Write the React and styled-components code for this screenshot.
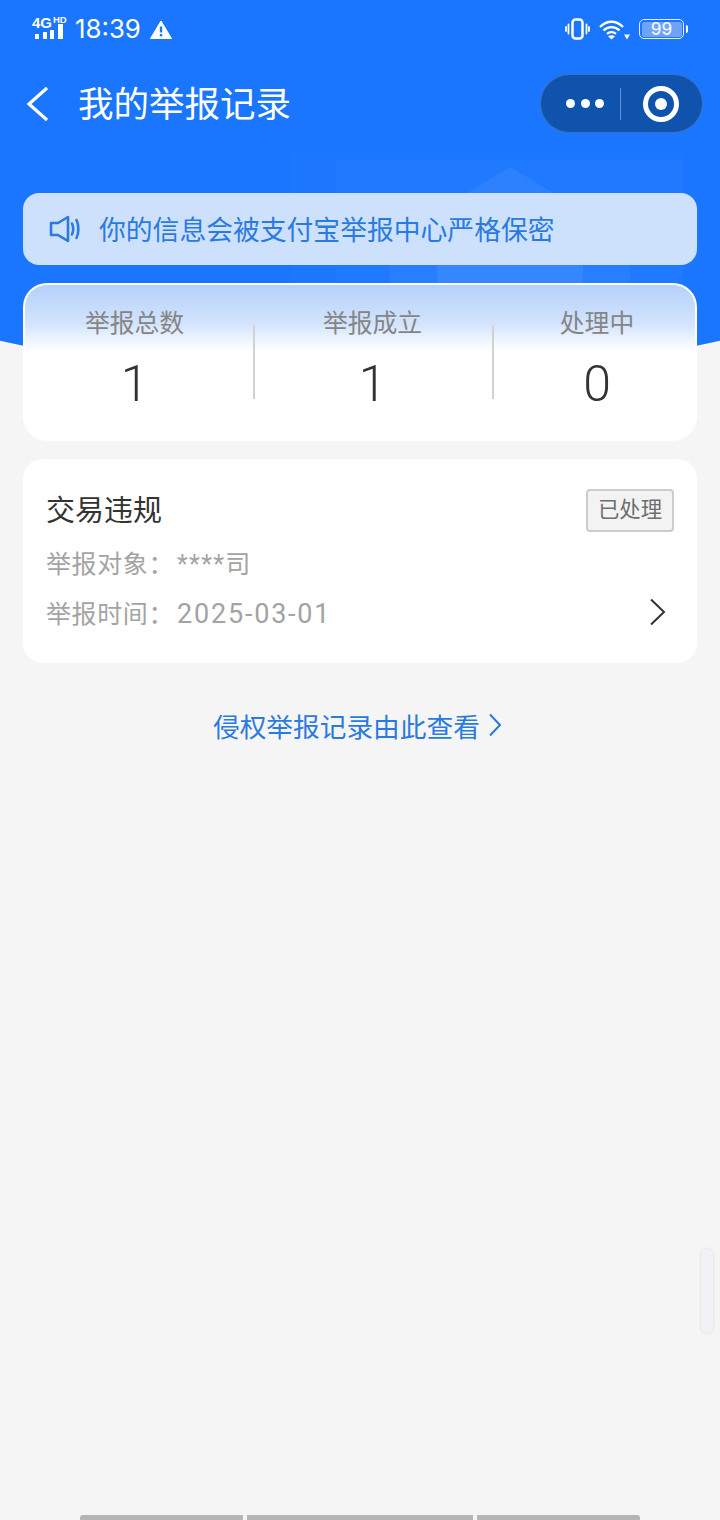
import React from "react";
import styled, { createGlobalStyle } from "styled-components";

const Global = createGlobalStyle`
  html, body { margin: 0; padding: 0; background: #f5f5f5; }
  * { box-sizing: border-box; }
`;

const CJK = `"Noto Sans CJK SC", "Noto Sans", sans-serif`;

const Page = styled.div`
  position: relative;
  width: 720px;
  height: 1520px;
  overflow: hidden;
  background: #f5f5f5;
  font-family: ${CJK};
`;
const Backdrop = styled.div`
  position: absolute;
  inset: 0 0 auto 0;
  height: 380px;
  background: #1a76ff;
  clip-path: ellipse(1670px 1670px at 50% calc(100% - 1670px));
`;
const Watermark = styled.svg`
  position: absolute;
  left: 280px;
  top: 150px;
`;
const Content = styled.div`
  position: relative;
  display: flex;
  flex-direction: column;
`;
const StatusBar = styled.div`
  height: 58px;
  padding: 0 32px 0 33px;
  display: flex;
  align-items: center;
  justify-content: space-between;
  color: #fff;
`;
const StatusGroup = styled.div`
  display: flex;
  align-items: center;
  gap: ${(p) => p.$gap || 9}px;
`;
const Signal = styled.div`
  position: relative;
  width: 33px;
  height: 24px;
  margin-top: -5px;
`;
const SigText = styled.span`
  position: absolute;
  left: ${(p) => p.$left}px;
  top: ${(p) => p.$top}px;
  font: 700 ${(p) => p.$size}px/1 "Liberation Sans", sans-serif;
  color: #fff;
`;
const Bars = styled.div`
  position: absolute;
  left: 2px;
  bottom: 0;
  display: flex;
  align-items: flex-end;
  gap: 3.5px;
`;
const Bar = styled.i`
  display: block;
  width: ${(p) => p.$w || 4}px;
  height: ${(p) => p.$h}px;
  background: #fff;
`;
const Time = styled.span`
  font: 400 25.8px/30px Inter, sans-serif;
  color: #fff;
`;
const Battery = styled.div`
  position: relative;
  width: 45px;
  height: 20px;
  margin-right: 4px;
  border: 1.5px solid #e6f0ff;
  border-radius: 5px;
  padding: 1.5px;
  &::after {
    content: "";
    position: absolute;
    right: -5px;
    top: 4.5px;
    width: 2.5px;
    height: 8px;
    border-radius: 0 2px 2px 0;
    background: #fff;
  }
`;
const BatteryFill = styled.div`
  height: 100%;
  border-radius: 2.5px;
  background: #6ea3f7;
  color: #f0f6ff;
  font: 500 17px/14px Inter, sans-serif;
  text-align: center;
`;
const NavBar = styled.div`
  height: 92px;
  padding: 0 17px 0 26px;
  display: flex;
  align-items: flex-start;
`;
const BackIcon = styled.svg`
  margin-top: 28px;
  flex: none;
`;
const Title = styled.div`
  margin: 19px 0 0 28px;
  font-size: 35.5px;
  line-height: 50px;
  color: #fff;
  flex: 1;
`;
const Capsule = styled.div`
  width: 163px;
  height: 59px;
  margin-top: 16px;
  border-radius: 30px;
  background: #0f53ac;
  border: 1px solid rgba(255, 255, 255, 0.18);
  display: flex;
  align-items: center;
`;
const Dots = styled.div`
  width: 63px;
  display: flex;
  justify-content: flex-end;
  gap: 5.5px;
`;
const Dot = styled.i`
  display: block;
  width: 9px;
  height: 9px;
  border-radius: 50%;
  background: #fff;
`;
const CapsuleDivider = styled.i`
  display: block;
  width: 1px;
  height: 32px;
  margin-left: 16px;
  background: rgba(255, 255, 255, 0.35);
`;
const Ring = styled.div`
  width: 36px;
  height: 36px;
  margin-left: 22px;
  border: 5px solid #fff;
  border-radius: 50%;
  display: flex;
  align-items: center;
  justify-content: center;
  &::after {
    content: "";
    width: 12px;
    height: 12px;
    border-radius: 50%;
    background: #fff;
  }
`;
const Notice = styled.div`
  height: 72px;
  margin: 43px 23px 0;
  padding: 0 0 1px 26px;
  border-radius: 16px;
  background: #cde1fd;
  display: flex;
  align-items: center;
  gap: 19px;
  color: #2a7ae0;
  font-size: 26.8px;
  line-height: 36px;
`;
const StatsCard = styled.div`
  height: 158px;
  margin: 18px 23px 0;
  border-radius: 24px;
  border: 2px solid #fff;
  border-bottom: 0;
  background: linear-gradient(180deg, #b4d1fb 0%, #d3e4fd 25%, #f0f6ff 36%, #fff 43%);
  display: grid;
  grid-template-columns: 228px 2px 237px 2px 1fr;
  padding-top: 18px;
`;
const Stat = styled.div`
  display: flex;
  flex-direction: column;
  align-items: center;
  padding: 0 ${(p) => p.$pr || 0}px 0 ${(p) => p.$pl || 0}px;
`;
const StatLabel = styled.div`
  font-size: 24.8px;
  line-height: 36px;
  color: #858585;
`;
const StatValue = styled.div`
  margin-top: 16px;
  font: 300 50px/58px Roboto, sans-serif;
  color: #333;
`;
const StatDivider = styled.i`
  display: block;
  width: 2px;
  height: 74px;
  margin-top: 22px;
  background: #d2d2d2;
`;
const RecordCard = styled.div`
  height: 204px;
  margin: 18px 23px 0;
  padding: 30px 23px 0 23px;
  border-radius: 20px;
  background: #fff;
  display: flex;
  flex-direction: column;
`;
const RecordHead = styled.div`
  display: flex;
  align-items: flex-start;
  justify-content: space-between;
`;
const RecordTitle = styled.div`
  font-size: 29px;
  line-height: 38px;
  color: #333;
`;
const Tag = styled.div`
  width: 88px;
  height: 43px;
  border: 2px solid #cccccc;
  border-radius: 4px;
  background: #f3f3f3;
  color: #6e6e6e;
  font-size: 21.4px;
  line-height: 34px;
  text-align: center;
`;
const Line = styled.div`
  height: 50px;
  display: flex;
  align-items: center;
  color: #a3a3a3;
  font-size: 25px;
  letter-spacing: 0.6px;
  margin-top: ${(p) => p.$mt || 0}px;
`;
const Key = styled.span`
  width: 131px;
  flex: none;
`;
const Val = styled.span`
  flex: 1;
  font-family: Roboto, ${CJK};
  font-size: ${(p) => p.$size || 25}px;
  letter-spacing: ${(p) => p.$track || 1.3}px;
  padding-top: ${(p) => p.$pt || 0}px;
`;
const Chevron = styled.svg`
  flex: none;
  margin-right: 8px;
`;
const LinkRow = styled.div`
  margin-top: 42px;
  height: 40px;
  padding-left: 213px;
  display: flex;
  align-items: center;
  gap: 8px;
  color: #2a7ae0;
  font-size: 26.7px;
`;
const ScrollThumb = styled.div`
  position: absolute;
  left: 701px;
  top: 1249px;
  width: 12px;
  height: 84px;
  border-radius: 6px;
  background: #f1f2f8;
  box-shadow: 0 0 2px 1px #e6e6e6;
`;
const Indicator = styled.div`
  position: absolute;
  left: 80px;
  bottom: 0;
  display: flex;
  gap: 4px;
`;
const Segment = styled.i`
  display: block;
  width: ${(p) => p.$w}px;
  height: 5px;
  background: #b5b5b5;
  border-radius: ${(p) => p.$r || "0"};
`;

export default function App() {
  return (
    <Page>
      <Global />
      <Backdrop>
        <Watermark width="420" height="230" viewBox="0 0 420 230">
          <rect x="12" y="3" width="391" height="227" fill="#fff" opacity="0.015" />
          <rect x="57" y="10" width="346" height="220" fill="#fff" opacity="0.015" />
          <rect x="110" y="90" width="240" height="140" fill="#fff" opacity="0.035" />
          <polygon points="230,17 187,43 273,43" fill="#fff" opacity="0.06" />
          <rect x="157" y="100" width="146" height="130" fill="#fff" opacity="0.07" />
        </Watermark>
      </Backdrop>
      <Content>
        <StatusBar>
          <StatusGroup>
            <Signal>
              <SigText $left={-1} $top={0} $size={15}>4G</SigText>
              <SigText $left={20} $top={0} $size={9.5}>HD</SigText>
              <Bars>
                <Bar $h={5} />
                <Bar $h={7} />
                <Bar $h={9} />
                <Bar $h={15} $w={5} />
              </Bars>
            </Signal>
            <Time>18:39</Time>
            <svg width="22" height="19" viewBox="0 0 22 19">
              <path d="M11 1 L21.5 18.5 H0.5 Z" fill="#fff" stroke="#fff" strokeLinejoin="round" />
              <rect x="9.8" y="6.5" width="2.4" height="6" fill="#1a76ff" />
              <rect x="9.8" y="14" width="2.4" height="2.4" fill="#1a76ff" />
            </svg>
          </StatusGroup>
          <StatusGroup $gap={9}>
            <svg width="25" height="22" viewBox="0 0 25 22" fill="none" stroke="#fff" strokeLinecap="round">
              <rect x="7.5" y="1.5" width="10" height="19" rx="3" strokeWidth="2.5" />
              <path d="M3.5 6.5 V15.5 M1 9 V13 M21.5 6.5 V15.5 M24 9 V13" strokeWidth="1.8" />
            </svg>
            <svg width="31" height="21" viewBox="0 0 31 21" fill="none">
              <path d="M1 8 C7.5 1 17.5 1 24 8" stroke="#fff" strokeWidth="2.4" />
              <path d="M4.5 11.5 C9 7 16 7 20.5 11.5" stroke="#fff" strokeWidth="2.4" />
              <path d="M8 14.8 C10.5 12.6 14.5 12.6 17 14.8" stroke="#fff" strokeWidth="2.2" />
              <path d="M9 17.3 C11 15.8 14 15.8 16 17.3 L12.5 20.5 Z" fill="#fff" />
              <path d="M25 15.5 H31 L28 20.5 Z" fill="#fff" />
            </svg>
            <Battery>
              <BatteryFill>99</BatteryFill>
            </Battery>
          </StatusGroup>
        </StatusBar>
        <NavBar>
          <BackIcon width="24" height="36" viewBox="0 0 24 36" fill="none">
            <path d="M21 2 L3 18 L21 34" stroke="#fff" strokeWidth="3.2" />
          </BackIcon>
          <Title>我的举报记录</Title>
          <Capsule>
            <Dots>
              <Dot />
              <Dot />
              <Dot />
            </Dots>
            <CapsuleDivider />
            <Ring />
          </Capsule>
        </NavBar>
        <Notice>
          <svg width="31" height="28" viewBox="0 0 31 28" fill="none" stroke="#2a7ae0" strokeWidth="2.6">
            <path d="M2 8 H9 L19 2 V26 L9 20 H2 Z" strokeLinejoin="round" />
            <path d="M23 8.5 C24.6 12 24.6 16 23 19.5" strokeLinecap="round" />
            <path d="M27.5 5 C30 10 30 18 27.5 23" strokeLinecap="round" />
          </svg>
          你的信息会被支付宝举报中心严格保密
        </Notice>
        <StatsCard>
          <Stat $pr={9}>
            <StatLabel>举报总数</StatLabel>
            <StatValue>1</StatValue>
          </Stat>
          <StatDivider />
          <Stat $pr={2}>
            <StatLabel>举报成立</StatLabel>
            <StatValue>1</StatValue>
          </Stat>
          <StatDivider />
          <Stat $pl={5}>
            <StatLabel>处理中</StatLabel>
            <StatValue>0</StatValue>
          </Stat>
        </StatsCard>
        <RecordCard>
          <RecordHead>
            <RecordTitle>交易违规</RecordTitle>
            <Tag>已处理</Tag>
          </RecordHead>
          <Line $mt={5}>
            <Key>举报对象：</Key>
            <Val>****司</Val>
          </Line>
          <Line>
            <Key>举报时间：</Key>
            <Val $size={27} $track={1.8} $pt={3}>2025-03-01</Val>
            <Chevron width="17" height="28" viewBox="0 0 17 28" fill="none">
              <path d="M2 1.5 L15 14 L2 26.5" stroke="#333" strokeWidth="2" />
            </Chevron>
          </Line>
        </RecordCard>
        <LinkRow>
          侵权举报记录由此查看
          <svg width="14" height="24" viewBox="0 0 14 24" fill="none">
            <path d="M2 1.5 L12 12 L2 22.5" stroke="#2a7ae0" strokeWidth="2" />
          </svg>
        </LinkRow>
      </Content>
      <ScrollThumb />
      <Indicator>
        <Segment $w={163} $r="3px 0 0 0" />
        <Segment $w={226} />
        <Segment $w={163} $r="0 3px 0 0" />
      </Indicator>
    </Page>
  );
}
